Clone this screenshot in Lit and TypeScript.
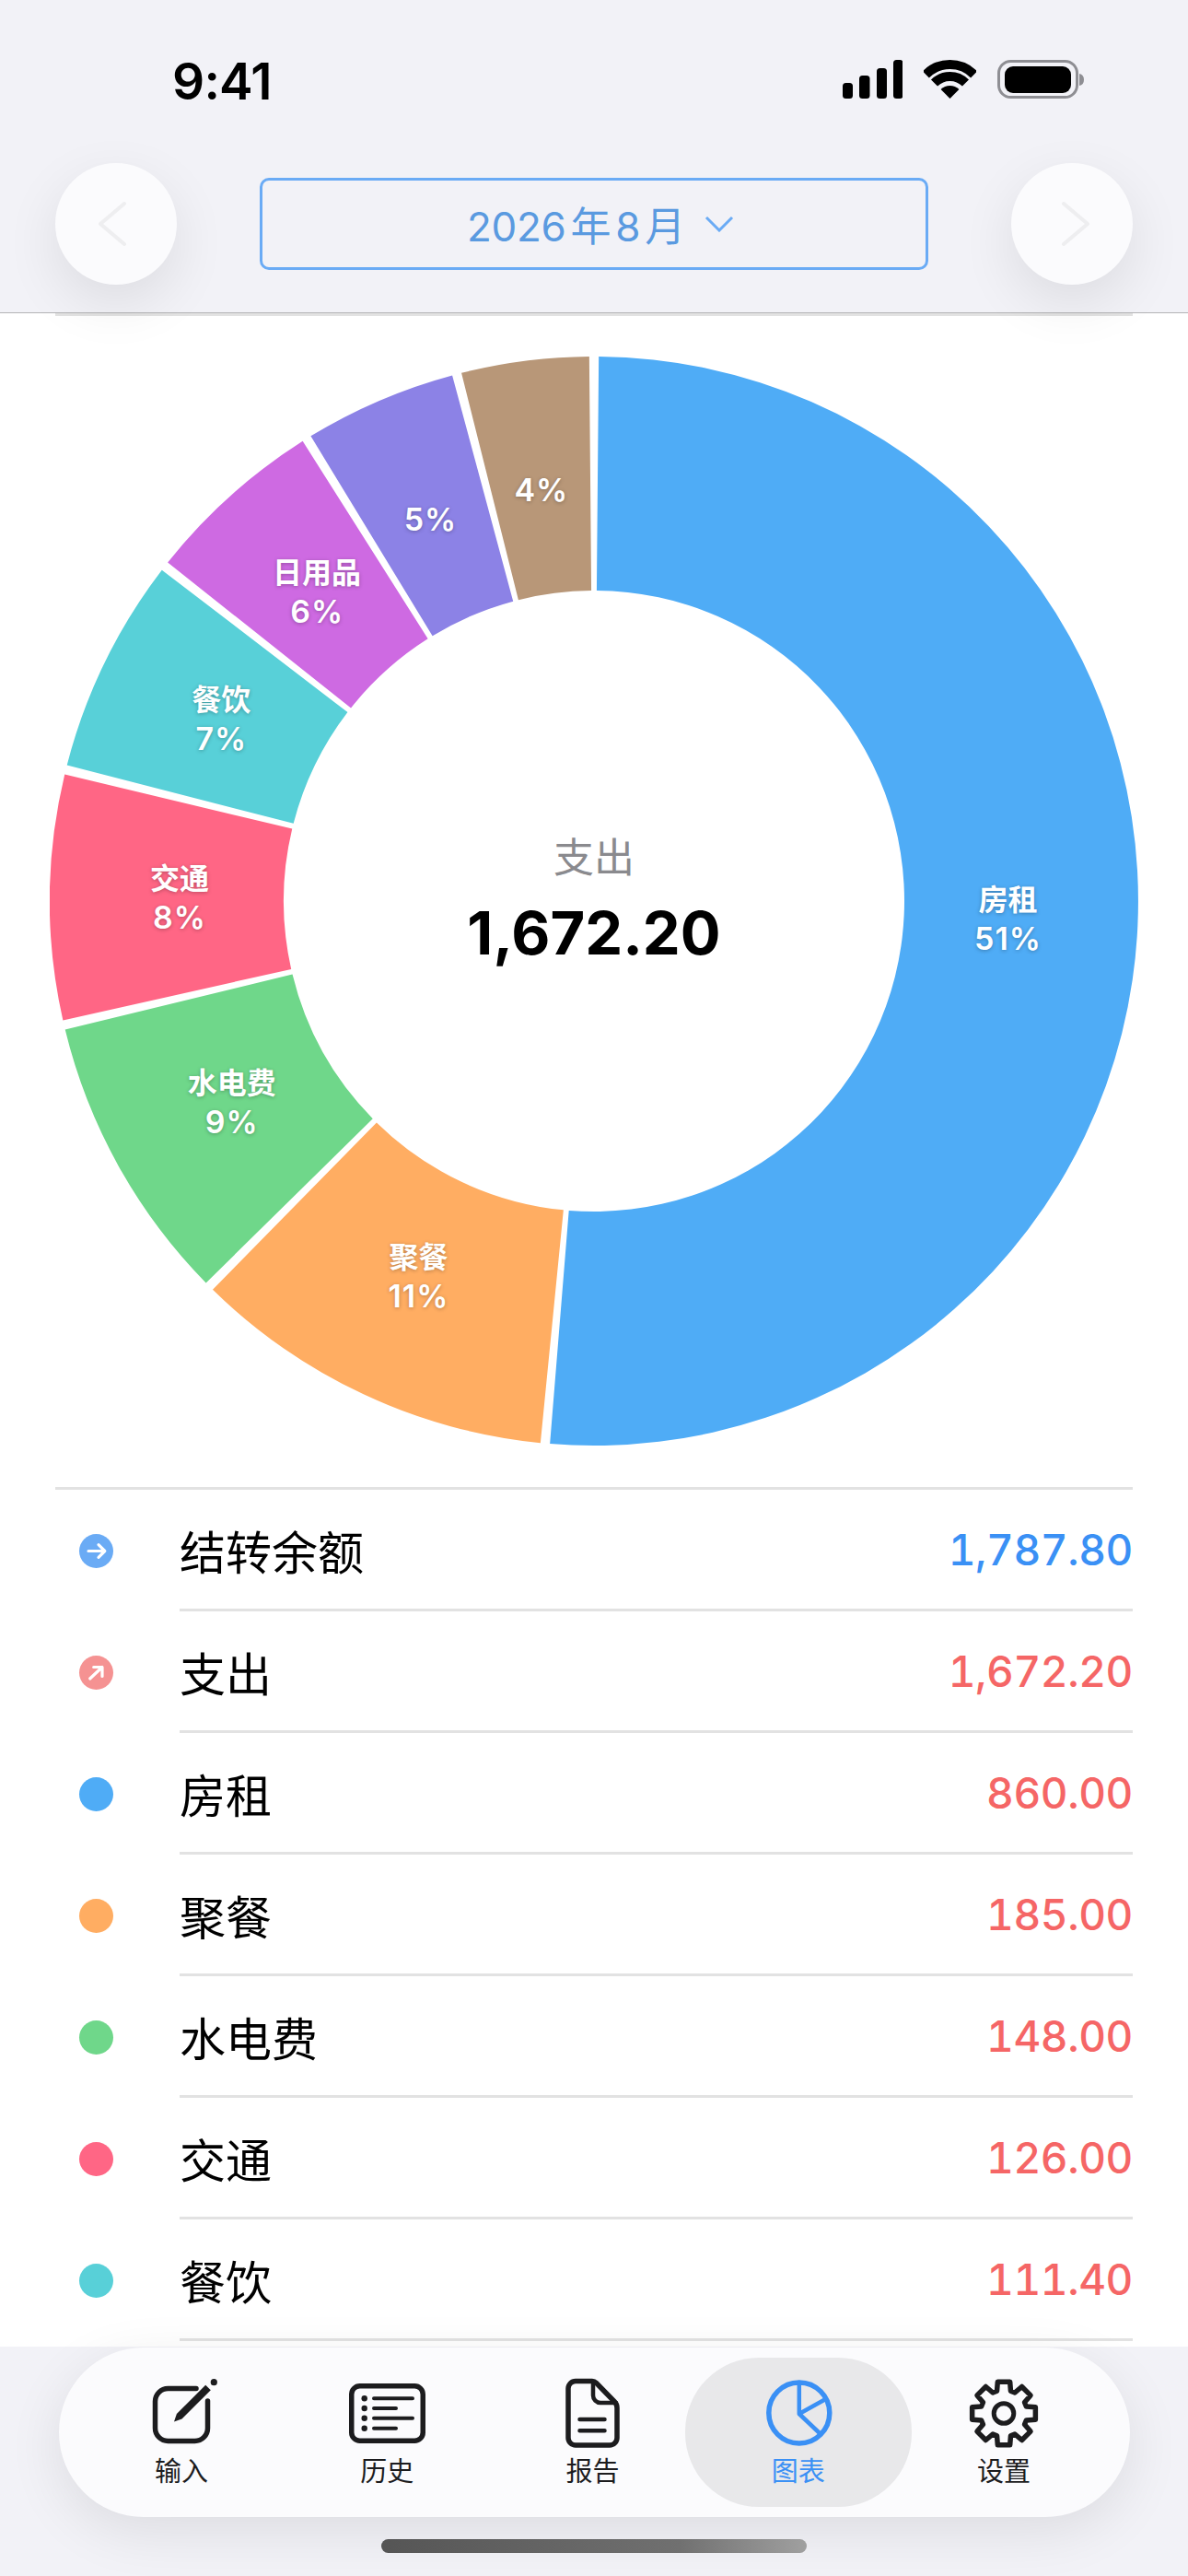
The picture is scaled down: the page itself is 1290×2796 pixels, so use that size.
import { LitElement, html, css, svg } from "lit";
import { customElement } from "lit/decorators.js";

const CX = 591;
const CY = 591;
const OUTER = 591;
const INNER = 337;
const LABEL_R = 450;
const PAD = 0.5;

const slices = [
  { name: "房租", value: 860, amount: "860.00", pct: "51%", color: "#4facf6" },
  { name: "聚餐", value: 185, amount: "185.00", pct: "11%", color: "#ffad62" },
  { name: "水电费", value: 148, amount: "148.00", pct: "9%", color: "#6fd78a" },
  { name: "交通", value: 126, amount: "126.00", pct: "8%", color: "#ff6685" },
  { name: "餐饮", value: 111.4, amount: "111.40", pct: "7%", color: "#58d0d8" },
  { name: "日用品", value: 93.8, amount: "93.80", pct: "6%", color: "#ce6ae2" },
  { name: "", value: 80.2, amount: "80.20", pct: "5%", color: "#8c82e6" },
  { name: "", value: 67.8, amount: "67.80", pct: "4%", color: "#b89778" },
];
const total = slices.reduce((s, x) => s + x.value, 0);

function pt(r: number, deg: number) {
  const a = (deg * Math.PI) / 180;
  return `${(CX + r * Math.sin(a)).toFixed(2)} ${(CY - r * Math.cos(a)).toFixed(2)}`;
}

function arc(start: number, end: number) {
  const a = start + PAD;
  const b = end - PAD;
  const big = b - a > 180 ? 1 : 0;
  return `M${pt(OUTER, a)} A${OUTER} ${OUTER} 0 ${big} 1 ${pt(OUTER, b)} L${pt(INNER, b)} A${INNER} ${INNER} 0 ${big} 0 ${pt(INNER, a)} Z`;
}

// 8 tooth gear outline, tooth on top
function gearPath() {
  const c = { x: 45, y: 39.5 };
  const out: string[] = [];
  for (let i = 0; i < 8; i++) {
    const m = i * 45;
    const pts: [number, number][] = [
      [25.5, m - 17],
      [35, m - 11],
      [35, m + 11],
      [25.5, m + 17],
    ];
    for (const [r, d] of pts) {
      const a = (d * Math.PI) / 180;
      out.push(`${(c.x + r * Math.sin(a)).toFixed(2)} ${(c.y - r * Math.cos(a)).toFixed(2)}`);
    }
  }
  return "M" + out.join(" L") + " Z";
}

const editIcon = svg`
  <path d="M61 12.5 H30.5 a14 14 0 0 0 -14 14 V55.5 a14 14 0 0 0 14 14 H59.5 a14 14 0 0 0 14 -14 V26" class="st" stroke-width="5.5"/>
  <polygon points="37,48.5 39.9,40 71.2,8.7 76.8,14.3 45.5,45.6" fill="currentColor"/>
  <circle cx="80.3" cy="5.7" r="3.6" fill="currentColor"/>`;

const listIcon = svg`
  <rect x="6.75" y="9.75" width="77.5" height="59.5" rx="9" class="st" stroke-width="5.5"/>
  <g fill="currentColor">
    <circle cx="20.7" cy="23.3" r="3.2"/><circle cx="20.7" cy="34" r="3.2"/>
    <circle cx="20.7" cy="44.7" r="3.2"/><circle cx="20.7" cy="55.7" r="3.2"/>
  </g>
  <path d="M31 23.3 H73 M31 34 H55 M31 44.7 H73 M31 55.7 H55" class="st" stroke-width="4"/>`;

const docIcon = svg`
  <path d="M26 4.5 H44 q2.5 0 4.5 2 L68 26.5 q3 3 3 7 V66 a8 8 0 0 1 -8 8 H26 a8 8 0 0 1 -8 -8 V12.5 a8 8 0 0 1 8 -8 Z" class="st" stroke-width="5.5"/>
  <path d="M45 5 V20 a8 8 0 0 0 8 8 H70 M30.5 46 H57.5 M30.5 58.3 H57.5" class="st" stroke-width="4.5"/>`;

const pieIcon = svg`
  <circle cx="45.8" cy="39" r="33" class="st" stroke-width="5.5"/>
  <path d="M45.8 6 V40 L68 61 M45.8 40 L74.5 24" class="st" stroke-width="4.5"/>`;

const gearIcon = svg`
  <path d=${gearPath()} class="st" stroke-width="5.5"/>
  <circle cx="45" cy="39.5" r="10.8" class="st" stroke-width="5"/>`;

const tabs = [
  { label: "输入", icon: editIcon },
  { label: "历史", icon: listIcon },
  { label: "报告", icon: docIcon },
  { label: "图表", icon: pieIcon, active: true },
  { label: "设置", icon: gearIcon },
];

@customElement("app-root")
export class AppRoot extends LitElement {
  static styles = css`
    :host {
      display: flex;
      flex-direction: column;
      width: 1290px;
      height: 2796px;
      overflow: hidden;
      background: #fff;
      font-family: Inter, "Noto Sans CJK SC", sans-serif;
      color: #000;
    }

    .top {
      position: relative;
      z-index: 1;
      height: 340px;
      box-sizing: border-box;
      flex: none;
      background: #f2f2f7;
      border-bottom: 1px solid #b4b4b6;
    }
    .status {
      height: 177px;
      box-sizing: border-box;
      padding: 59px 113px 0 187px;
      display: flex;
      justify-content: space-between;
    }
    .time {
      font-size: 55px;
      line-height: 58px;
      font-weight: 600;
      letter-spacing: -0.8px;
    }
    .status-icons {
      display: flex;
      gap: 23px;
      padding-top: 6px;
    }
    .status-icons svg {
      display: block;
    }

    .nav {
      display: flex;
      align-items: center;
      justify-content: space-between;
      padding: 0 60px;
    }
    .round {
      width: 132px;
      height: 132px;
      border-radius: 50%;
      background: #fbfbfd;
      box-shadow: 0 20px 60px rgba(0, 0, 0, 0.09);
    }
    .round svg {
      display: block;
    }
    .date {
      width: 726px;
      height: 100px;
      box-sizing: border-box;
      border: 3px solid #6aabf5;
      border-radius: 10px;
      display: flex;
      align-items: center;
      justify-content: center;
      gap: 16px;
      padding-left: 14px;
      font-size: 44px;
      letter-spacing: -0.3px;
      color: #5a9ae0;
    }
    .date .cjk {
      margin: 0 5px;
    }
    .date svg {
      display: block;
    }

    .rule {
      height: 3px;
      flex: none;
      margin: 0 60px;
      background: #e2e2e2;
    }

    .chart {
      position: relative;
      flex: none;
      width: 1182px;
      height: 1182px;
      margin: 44px auto 45px;
    }
    .chart svg {
      display: block;
    }
    .slice-label {
      position: absolute;
      transform: translate(-50%, -50%);
      display: flex;
      flex-direction: column;
      align-items: center;
      gap: 6px;
      font-size: 32px;
      line-height: 36px;
      font-weight: 600;
      color: #fff;
      white-space: nowrap;
      text-shadow: 0 1px 4px rgba(0, 0, 0, 0.28);
    }
    .slice-label .pct {
      font-size: 34px;
      letter-spacing: 1px;
    }
    .center {
      position: absolute;
      left: 50%;
      top: 50%;
      transform: translate(-50%, -50%);
      display: flex;
      flex-direction: column;
      align-items: center;
      gap: 14px;
      white-space: nowrap;
    }
    .center .cap {
      font-size: 44px;
      line-height: 56px;
      color: #8a8a8e;
    }
    .center .sum {
      font-size: 65px;
      line-height: 80px;
      font-weight: 700;
    }

    .list {
      flex: 1;
      min-height: 0;
      padding: 0 60px;
      overflow: hidden;
    }
    .list-top {
      height: 3px;
      background: #e2e2e2;
    }
    .row {
      display: flex;
      align-items: center;
      height: 132px;
    }
    .dot {
      flex: none;
      width: 37px;
      height: 37px;
      margin: 0 72px 0 26px;
      border-radius: 50%;
    }
    .dot svg {
      display: block;
    }
    .row-body {
      flex: 1;
      height: 132px;
      box-sizing: border-box;
      border-bottom: 3px solid #e2e2e2;
      display: flex;
      align-items: center;
      justify-content: space-between;
    }
    .name {
      font-size: 50px;
    }
    .amount {
      font-size: 46px;
      font-weight: 550;
      letter-spacing: -0.4px;
      font-variant-numeric: tabular-nums;
    }
    .amount.blue {
      color: #3a90f5;
    }
    .amount.red {
      color: #f56666;
    }

    .bottom {
      position: relative;
      z-index: 1;
      flex: none;
      height: 249px;
      background: #f2f2f7;
      display: flex;
      flex-direction: column;
      align-items: center;
    }
    .pill {
      width: 1163px;
      height: 184px;
      box-sizing: border-box;
      margin-top: 1px;
      padding: 0 25px 0 22px;
      border-radius: 92px;
      background: #fbfbfd;
      box-shadow: 0 16px 60px rgba(0, 0, 0, 0.09);
      display: flex;
    }
    .tab {
      position: relative;
      flex: 1;
      display: flex;
      flex-direction: column;
      align-items: center;
      padding-top: 32px;
      font-size: 29px;
      line-height: 38px;
      color: #1c1c1e;
    }
    .tab svg {
      display: block;
      position: relative;
      width: 90px;
      height: 80px;
      margin-bottom: 4px;
    }
    .tab span {
      position: relative;
    }
    .tab.on {
      color: #3a90f5;
    }
    .tab.on::before {
      content: "";
      position: absolute;
      left: -11px;
      right: -12px;
      top: 11px;
      bottom: 11px;
      border-radius: 80px;
      background: #e8e8ea;
    }
    .st {
      fill: none;
      stroke: currentColor;
      stroke-linecap: round;
      stroke-linejoin: round;
    }
    .home {
      width: 462px;
      height: 15px;
      margin-top: 24px;
      border-radius: 8px;
      background: linear-gradient(90deg, #555 0%, #707070 70%, #a0a0a0 100%);
    }
  `;

  private renderStatusIcons() {
    return html`
      <div class="status-icons">
        <svg width="65" height="42" viewBox="0 0 65 42" fill="#000">
          <rect x="0" y="25" width="11" height="17" rx="3.5" />
          <rect x="18" y="17" width="11.5" height="25" rx="3.5" />
          <rect x="37" y="9" width="11" height="33" rx="3.5" />
          <rect x="55" y="0" width="10.5" height="42" rx="3.5" />
        </svg>
        <svg width="57" height="42" viewBox="0 0 57 42">
          <path d="M2.34 15.84 A37 37 0 0 1 54.66 15.84 M11.53 25.03 A24 24 0 0 1 45.47 25.03" fill="none" stroke="#000" stroke-width="10" />
          <path d="M28.5 42 L18.6 32.1 A14 14 0 0 1 38.4 32.1 Z" fill="#000" />
        </svg>
        <svg width="94" height="42" viewBox="0 0 94 42">
          <rect x="1.5" y="1.5" width="85" height="39" rx="13" fill="none" stroke="#8e8e93" stroke-width="3" />
          <rect x="8" y="7" width="72" height="29" rx="9" fill="#000" />
          <path d="M89 15 q5 1 5 6.5 q0 5.5 -5 6.5 Z" fill="#8e8e93" />
        </svg>
      </div>
    `;
  }

  private renderChart() {
    let at = 0;
    const parts = slices.map((s) => {
      const start = at;
      const end = at + (s.value / total) * 360;
      at = end;
      const mid = (((start + end) / 2) * Math.PI) / 180;
      return {
        ...s,
        d: arc(start, end),
        x: CX + LABEL_R * Math.sin(mid),
        y: CY - LABEL_R * Math.cos(mid),
      };
    });
    return html`
      <div class="chart">
        <svg width="1182" height="1182" viewBox="0 0 1182 1182">
          ${parts.map((p) => svg`<path d=${p.d} fill=${p.color}></path>`)}
        </svg>
        ${parts.map(
          (p) => html`
            <div class="slice-label" style="left:${p.x}px;top:${p.y}px">
              ${p.name ? html`<span>${p.name}</span>` : ""}
              <span class="pct">${p.pct}</span>
            </div>
          `
        )}
        <div class="center">
          <div class="cap">支出</div>
          <div class="sum">1,672.20</div>
        </div>
      </div>
    `;
  }

  private renderRow(name: string, amount: string, tone: string, dot: unknown, bg: string) {
    return html`
      <div class="row">
        <div class="dot" style="background:${bg}">${dot}</div>
        <div class="row-body">
          <span class="name">${name}</span>
          <span class="amount ${tone}">${amount}</span>
        </div>
      </div>
    `;
  }

  render() {
    const arrowRight = html`<svg width="37" height="37" viewBox="0 0 37 37" class="st" stroke-width="3.2" style="color:#fff">
      <path d="M10 18.5 H27.5 M21 11.7 L27.8 18.5 L21 25.3" />
    </svg>`;
    const arrowUp = html`<svg width="37" height="37" viewBox="0 0 37 37" class="st" stroke-width="3.2" style="color:#fff">
      <path d="M11.7 25 L25 12.5 M15.7 12.5 H25 V22.5" />
    </svg>`;

    return html`
      <div class="top">
        <div class="status">
          <div class="time">9:41</div>
          ${this.renderStatusIcons()}
        </div>
        <div class="nav">
          <div class="round">
            <svg width="132" height="132" viewBox="0 0 132 132"><path d="M75 44 L49 66 L75 88" fill="none" stroke="#eeeef0" stroke-width="4" stroke-linecap="round" stroke-linejoin="round" /></svg>
          </div>
          <div class="date">
            <span>2026<span class="cjk">年</span>8<span class="cjk">月</span></span>
            <svg width="32" height="18" viewBox="0 0 32 18"><path d="M2 2 L16 16 L30 2" fill="none" stroke="#6aabf5" stroke-width="3" /></svg>
          </div>
          <div class="round">
            <svg width="132" height="132" viewBox="0 0 132 132"><path d="M57 44 L83 66 L57 88" fill="none" stroke="#eeeef0" stroke-width="4" stroke-linecap="round" stroke-linejoin="round" /></svg>
          </div>
        </div>
      </div>

      <div class="rule"></div>
      ${this.renderChart()}

      <div class="list">
        <div class="list-top"></div>
        ${this.renderRow("结转余额", "1,787.80", "blue", arrowRight, "#6aabf5")}
        ${this.renderRow("支出", "1,672.20", "red", arrowUp, "#f59292")}
        ${slices.slice(0, 5).map((s) => this.renderRow(s.name, s.amount, "red", "", s.color))}
      </div>

      <div class="bottom">
        <div class="pill">
          ${tabs.map(
            (t) => html`
              <div class="tab ${t.active ? "on" : ""}">
                <svg viewBox="0 0 90 80">${t.icon}</svg>
                <span>${t.label}</span>
              </div>
            `
          )}
        </div>
        <div class="home"></div>
      </div>
    `;
  }
}
